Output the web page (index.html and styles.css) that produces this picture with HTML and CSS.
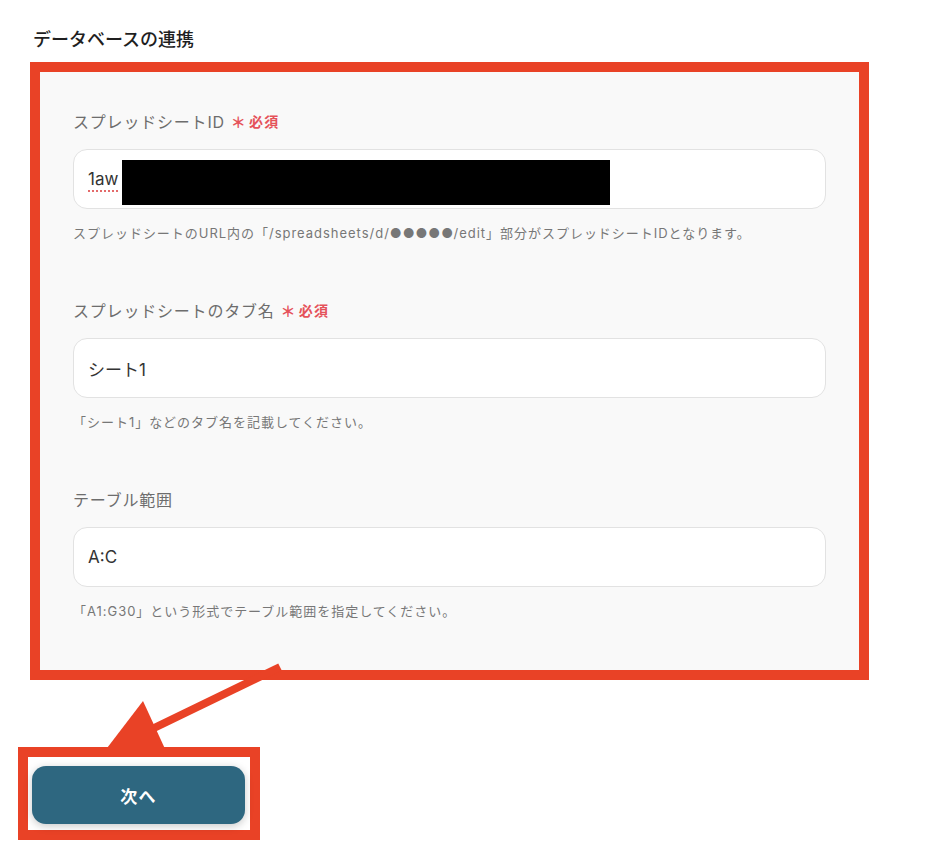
FILE: index.html
```html
<!DOCTYPE html>
<html lang="ja">
<head>
<meta charset="utf-8">
<title>データベースの連携</title>
<link rel="stylesheet" href="styles.css">
</head>
<body>
<div class="page">
  <h2 class="title">データベースの連携</h2>
  <div class="frame">
    <div class="panel">
      <div class="field">
        <div class="label">スプレッドシートID<span class="req"><span class="ast">＊</span>必須</span></div>
        <div class="input"><span class="spell">1aw</span><span class="redact"></span></div>
        <div class="help">スプレッドシートのURL内の「/spreadsheets/d/●●●●●/edit」部分がスプレッドシートIDとなります。</div>
      </div>
      <div class="field">
        <div class="label">スプレッドシートのタブ名<span class="req"><span class="ast">＊</span>必須</span></div>
        <div class="input">シート1</div>
        <div class="help">「シート1」などのタブ名を記載してください。</div>
      </div>
      <div class="field">
        <div class="label">テーブル範囲</div>
        <div class="input">A:C</div>
        <div class="help">「A1:G30」という形式でテーブル範囲を指定してください。</div>
      </div>
    </div>
  </div>
  <div class="btn-frame">
    <button class="next">次へ</button>
  </div>
</div>
<svg class="arrow" width="939" height="847" viewBox="0 0 939 847">
  <line x1="280" y1="667" x2="152" y2="729" stroke="#e94226" stroke-width="8"/>
  <polygon points="143,701 166,751 104,752" fill="#e94226"/>
</svg>
</body>
</html>
```

FILE: styles.css
```css
* { box-sizing: border-box; }
html, body {
  margin: 0;
  padding: 0;
  background: #ffffff;
}
body {
  width: 939px;
  height: 847px;
  position: relative;
  overflow: hidden;
  font-family: "Inter", "Noto Sans CJK JP", "Noto Sans", sans-serif;
  color: #333;
}
.page {
  padding: 28px 0 0 30px;
}
.title {
  margin: 0 0 10px 3px;
  font-size: 18px;
  line-height: 24px;
  font-weight: 500;
  color: #1f1f1f;
}
.frame {
  width: 839px;
  border: 10px solid #e94226;
  position: relative;
  z-index: 0;
}
.panel {
  background: #f9f9f9;
  padding: 38px 33px 49px 33px;
  display: flex;
  flex-direction: column;
  gap: 56px;
}
.field {
  display: flex;
  flex-direction: column;
}
.label {
  font-size: 16px;
  line-height: 24px;
  letter-spacing: 0.05em;
  color: #6d6d6d;
  display: flex;
  align-items: center;
}
.req {
  margin-left: 6px;
  color: #e5525a;
  font-size: 14px;
  font-weight: 600;
  letter-spacing: 0.1em;
  display: inline-flex;
  align-items: center;
}
.ast {
  font-size: 15px;
  font-weight: 700;
  margin-right: 3px;
  letter-spacing: 0;
  position: relative;
  top: 1px;
}
.input {
  margin-top: 15px;
  height: 60px;
  background: #fff;
  border: 1px solid #e2e2e2;
  border-radius: 14px;
  padding: 0 14px;
  display: flex;
  align-items: center;
  font-size: 17px;
  color: #333;
  position: relative;
}
.spell {
  text-decoration-line: underline;
  text-decoration-style: dotted;
  text-decoration-color: #e36a6a;
  text-decoration-thickness: 2px;
  text-underline-offset: 5px;
}
.redact {
  position: absolute;
  left: 48px;
  top: 10px;
  width: 488px;
  height: 45px;
  background: #000;
}
.help {
  margin-top: 14px;
  font-size: 13px;
  line-height: 20px;
  color: #777;
  letter-spacing: 0.075em;
}
.btn-frame {
  margin: 67px 0 0 -12px;
  width: 242px;
  height: 93px;
  border: 10px solid #e94226;
  background: #fff;
  padding: 9px 5px 6px 4px;
  position: relative;
  z-index: 2;
}
.next {
  display: block;
  width: 213px;
  height: 58px;
  border: none;
  border-radius: 14px;
  background: #2e6780;
  color: #fff;
  font-family: "Noto Sans CJK JP", "Noto Sans", sans-serif;
  font-size: 17px;
  font-weight: 700;
  letter-spacing: 0.08em;
  box-shadow: 0 2px 8px rgba(0, 0, 0, 0.22);
}
.arrow {
  position: absolute;
  left: 0;
  top: 0;
  z-index: 1;
  pointer-events: none;
}
```
